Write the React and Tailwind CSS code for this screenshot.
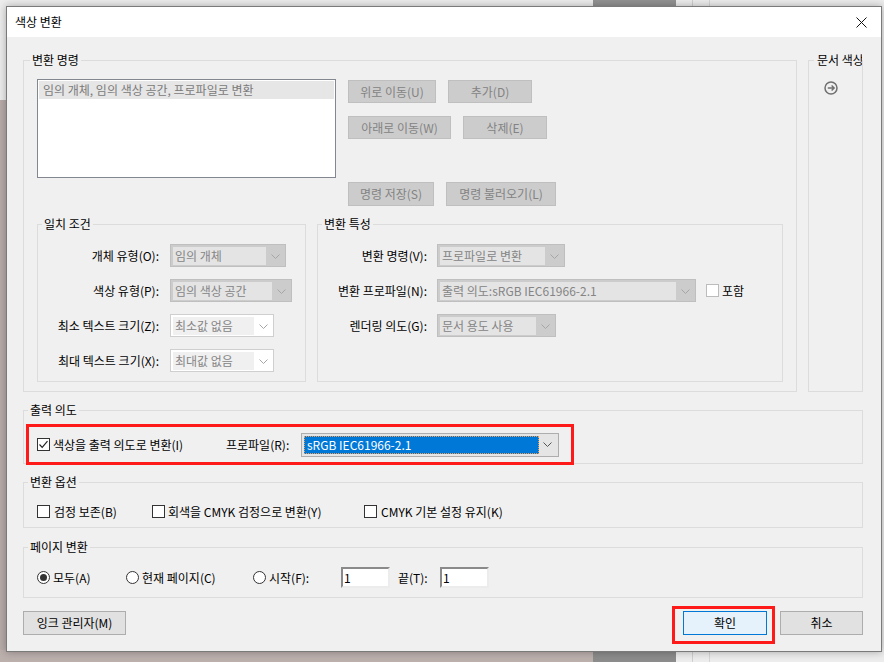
import React from 'react';

const Chevron = ({ color = '#a6a6a6' }) => (
  <svg width="9" height="5" viewBox="0 0 9 5">
    <path d="M0.5 0.5 L4.5 4.5 L8.5 0.5" fill="none" stroke={color} strokeWidth="1" />
  </svg>
);

function Group({ title, className = '', legendClass = 'ml-[4px] px-[2px]', children }) {
  return (
    <fieldset className={`min-w-0 border border-[#dcdcdc] ${className}`}>
      <legend className={`leading-[16px] text-black ${legendClass}`}>{title}</legend>
      {children}
    </fieldset>
  );
}

function DisabledButton({ className = '', children }) {
  return (
    <div className={`flex items-center justify-center border border-[#bfbfbf] bg-[#cccccc] text-[#838383] ${className}`}>
      {children}
    </div>
  );
}

function Combo({ className = '', text, white }) {
  return (
    <div
      className={`flex h-[23px] border pt-[2px] pb-[1px] pl-[2px] ${
        white ? 'border-[#cfcfcf] bg-white' : 'border-[#bfbfbf] bg-[#cccccc]'
      } ${className}`}
    >
      <div className={`flex-1 min-w-0 truncate pl-[2px] leading-[18px] text-[#858585] ${white ? 'bg-[#f0f0f0]' : 'bg-[#e4e4e4]'}`}>
        {text}
      </div>
      <div className="flex w-[19px] items-center justify-center">
        <Chevron />
      </div>
    </div>
  );
}

function Checkbox({ checked, disabled }) {
  return (
    <div
      className={`flex h-[13px] w-[13px] shrink-0 items-center justify-center border bg-white ${
        disabled ? 'border-[#bcbcbc]' : 'border-[#333333]'
      }`}
    >
      {checked && (
        <svg width="11" height="11" viewBox="0 0 11 11">
          <path d="M1.5 5.5 L4.2 8.3 L9.5 2.2" fill="none" stroke="#222" strokeWidth="1.2" />
        </svg>
      )}
    </div>
  );
}

function Radio({ checked }) {
  return (
    <div className="flex h-[13px] w-[13px] shrink-0 items-center justify-center rounded-full border border-[#333333] bg-white">
      {checked && <div className="h-[7px] w-[7px] rounded-full bg-[#333333]" />}
    </div>
  );
}

function Field({ value }) {
  return (
    <div className="h-[21px] w-[49px] border-[2px] border-t-[#8a8a8a] border-l-[#8a8a8a] border-r-[#ececec] border-b-[#ececec] bg-white pl-[1px] leading-[17px] text-black">
      {value}
    </div>
  );
}

function Button({ className = '', children }) {
  return (
    <div className={`flex h-[24px] items-center justify-center border ${className}`}>{children}</div>
  );
}

export default function App() {
  return (
    <div className="relative h-[662px] w-[884px] overflow-hidden bg-[#ededed] font-['Noto_Sans_CJK_KR','Noto_Sans',sans-serif] text-[12px] text-black">
      {/* desktop behind the dialog */}
      <div className="absolute left-0 top-[100px] bottom-0 w-[8px] bg-[#b8aca9]" />
      <div className="absolute left-0 bottom-0 h-[12px] w-[594px] bg-[#bcb0ad]" />
      <div className="absolute left-[593px] top-0 h-[8px] w-[83px] bg-[#929292]" />
      <div className="absolute left-[593px] bottom-0 h-[12px] w-[83px] bg-[#8c8c8c]" />
      <div className="absolute left-[692px] top-0 h-full w-px bg-[#cfcfcf]" />
      <div className="absolute left-[709px] top-0 h-full w-px bg-[#d6d6d6]" />

      {/* dialog */}
      <div className="absolute left-[6px] top-[6px] flex h-[646px] w-[876px] flex-col border border-[#7a7a7a] bg-[#f0f0f0] shadow-[0_0_8px_rgba(0,0,0,0.3)]">
        <div className="flex h-[30px] shrink-0 items-center justify-between bg-white pl-[8px] pr-[14px]">
          <span>색상 변환</span>
          <svg width="11" height="11" viewBox="0 0 11 11">
            <path d="M0.5 0.5 L10.5 10.5 M10.5 0.5 L0.5 10.5" stroke="#111" strokeWidth="1" />
          </svg>
        </div>

        <div className="flex flex-1 flex-col pl-[16px] pr-[18px] pt-[15px]">
          {/* row 1 */}
          <div className="flex h-[340px] gap-[11px]">
            <Group title="변환 명령" className="w-[774px]" legendClass="ml-[6px] px-[2px]">
              <div className="px-[13px] pt-[11px]">
                <div className="flex gap-[12px]">
                  <div className="h-[99px] w-[299px] border border-[#828790] bg-white p-px">
                    <div className="h-[18px] bg-[#e6e6e6] pl-[4px] leading-[18px] text-[#7a7a7a]">
                      임의 개체, 임의 색상 공간, 프로파일로 변환
                    </div>
                  </div>
                  <div className="flex flex-col pt-[1px]">
                    <div className="flex gap-[12px]">
                      <DisabledButton className="h-[23px] w-[88px]">위로 이동(U)</DisabledButton>
                      <DisabledButton className="h-[23px] w-[84px]">추가(D)</DisabledButton>
                    </div>
                    <div className="mt-[13px] flex gap-[12px]">
                      <DisabledButton className="h-[23px] w-[103px]">아래로 이동(W)</DisabledButton>
                      <DisabledButton className="h-[23px] w-[84px]">삭제(E)</DisabledButton>
                    </div>
                    <div className="mt-[43px] flex gap-[12px]">
                      <DisabledButton className="h-[24px] w-[86px]">명령 저장(S)</DisabledButton>
                      <DisabledButton className="h-[24px] w-[110px]">명령 불러오기(L)</DisabledButton>
                    </div>
                  </div>
                </div>

                <div className="mt-[10px] flex h-[166px] gap-[11px]">
                  <Group title="일치 조건" className="w-[269px]">
                    <div className="flex flex-col gap-[12px] pt-[12px]">
                      {[
                        ['개체 유형(O):', '임의 개체', 'w-[116px]', false],
                        ['색상 유형(P):', '임의 색상 공간', 'w-[122px]', false],
                        ['최소 텍스트 크기(Z):', '최소값 없음', 'w-[104px]', true],
                        ['최대 텍스트 크기(X):', '최대값 없음', 'w-[104px]', true],
                      ].map(([label, value, w, white]) => (
                        <div key={label} className="flex h-[23px] items-center">
                          <span className="w-[121px] text-right">{label}</span>
                          <Combo className={`ml-[11px] ${w}`} text={value} white={white} />
                        </div>
                      ))}
                    </div>
                  </Group>
                  <Group title="변환 특성" className="w-[466px]">
                    <div className="flex flex-col gap-[12px] pt-[12px]">
                      <div className="flex h-[23px] items-center">
                        <span className="w-[109px] text-right">변환 명령(V):</span>
                        <Combo className="ml-[10px] w-[128px]" text="프로파일로 변환" />
                      </div>
                      <div className="flex h-[23px] items-center">
                        <span className="w-[109px] text-right">변환 프로파일(N):</span>
                        <Combo className="ml-[10px] w-[259px]" text="출력 의도:sRGB IEC61966-2.1" />
                        <div className="ml-[10px] flex items-center gap-[3px]">
                          <Checkbox disabled />
                          <span>포함</span>
                        </div>
                      </div>
                      <div className="flex h-[23px] items-center">
                        <span className="w-[109px] text-right">렌더링 의도(G):</span>
                        <Combo className="ml-[10px] w-[119px]" text="문서 용도 사용" />
                      </div>
                    </div>
                  </Group>
                </div>
              </div>
            </Group>

            <Group
              title="문서 색상"
              className="w-[55px]"
              legendClass="ml-[5px] pl-[3px] max-w-[48px] overflow-hidden whitespace-nowrap"
            >
              <div className="ml-[15px] mt-[13px]">
                <svg width="14" height="14" viewBox="0 0 14 14">
                  <circle cx="7" cy="7" r="6" fill="none" stroke="#6f6f6f" strokeWidth="1.5" />
                  <path d="M3.8 7 H10 M7.6 4.4 L10.2 7 L7.6 9.6" fill="none" stroke="#6f6f6f" strokeWidth="1.4" />
                </svg>
              </div>
            </Group>
          </div>

          {/* 출력 의도 */}
          <Group title="출력 의도" className="mt-[10px]">
            <div className="relative -mb-[2px] ml-[2px] mt-[6px] flex h-[41px] w-[548px] items-center border-[3px] border-[#ff1a1a] pl-[8px]">
              <div className="flex w-[189px] items-center gap-[3px]">
                <Checkbox checked />
                <span>색상을 출력 의도로 변환(I)</span>
              </div>
              <span className="w-[75px]">프로파일(R):</span>
              <div className="flex h-[24px] w-[258px] border border-[#adadad] bg-[#e5e5e5] p-[2px]">
                <div className="flex-1 border border-dotted border-[#f39a4f] bg-[#0078d7] pl-[2px] leading-[16px] text-white">
                  sRGB IEC61966-2.1
                </div>
                <div className="flex w-[17px] items-center justify-center">
                  <Chevron color="#555" />
                </div>
              </div>
            </div>
          </Group>

          {/* 변환 옵션 */}
          <Group title="변환 옵션" className="mt-[10px]">
            <div className="flex h-[13px] items-center pb-0 pl-[13px] mt-[15px] mb-[9px]">
              <div className="flex w-[115px] items-center gap-[4px]">
                <Checkbox />
                <span>검정 보존(B)</span>
              </div>
              <div className="flex w-[212px] items-center gap-[3px]">
                <Checkbox />
                <span>회색을 CMYK 검정으로 변환(Y)</span>
              </div>
              <div className="flex items-center gap-[4px]">
                <Checkbox />
                <span>CMYK 기본 설정 유지(K)</span>
              </div>
            </div>
          </Group>

          {/* 페이지 변환 */}
          <Group title="페이지 변환" className="mt-[11px]">
            <div className="flex h-[21px] items-center pl-[13px] mt-[12px] mb-[9px]">
              <div className="flex w-[89px] items-center gap-[3px]">
                <Radio checked />
                <span>모두(A)</span>
              </div>
              <div className="flex w-[127px] items-center gap-[3px]">
                <Radio />
                <span>현재 페이지(C)</span>
              </div>
              <div className="flex w-[88px] items-center gap-[3px]">
                <Radio />
                <span>시작(F):</span>
              </div>
              <Field value="1" />
              <span className="ml-[8px] w-[42px]">끝(T):</span>
              <Field value="1" />
            </div>
          </Group>

          {/* buttons */}
          <div className="mt-[13px] flex items-start justify-between">
            <Button className="w-[103px] border-[#adadad] bg-[#e1e1e1]">잉크 관리자(M)</Button>
            <div className="flex items-start">
              <div className="-mt-[5px] border-[3px] border-[#ff1a1a] pb-[6px] pl-[8px] pr-[5px] pt-[2px]">
                <Button className="w-[84px] border-[#0078d7] bg-[#e5f1fb]">확인</Button>
              </div>
              <Button className="ml-[5px] w-[83px] border-[#adadad] bg-[#e1e1e1]">취소</Button>
            </div>
          </div>
        </div>
      </div>
    </div>
  );
}
